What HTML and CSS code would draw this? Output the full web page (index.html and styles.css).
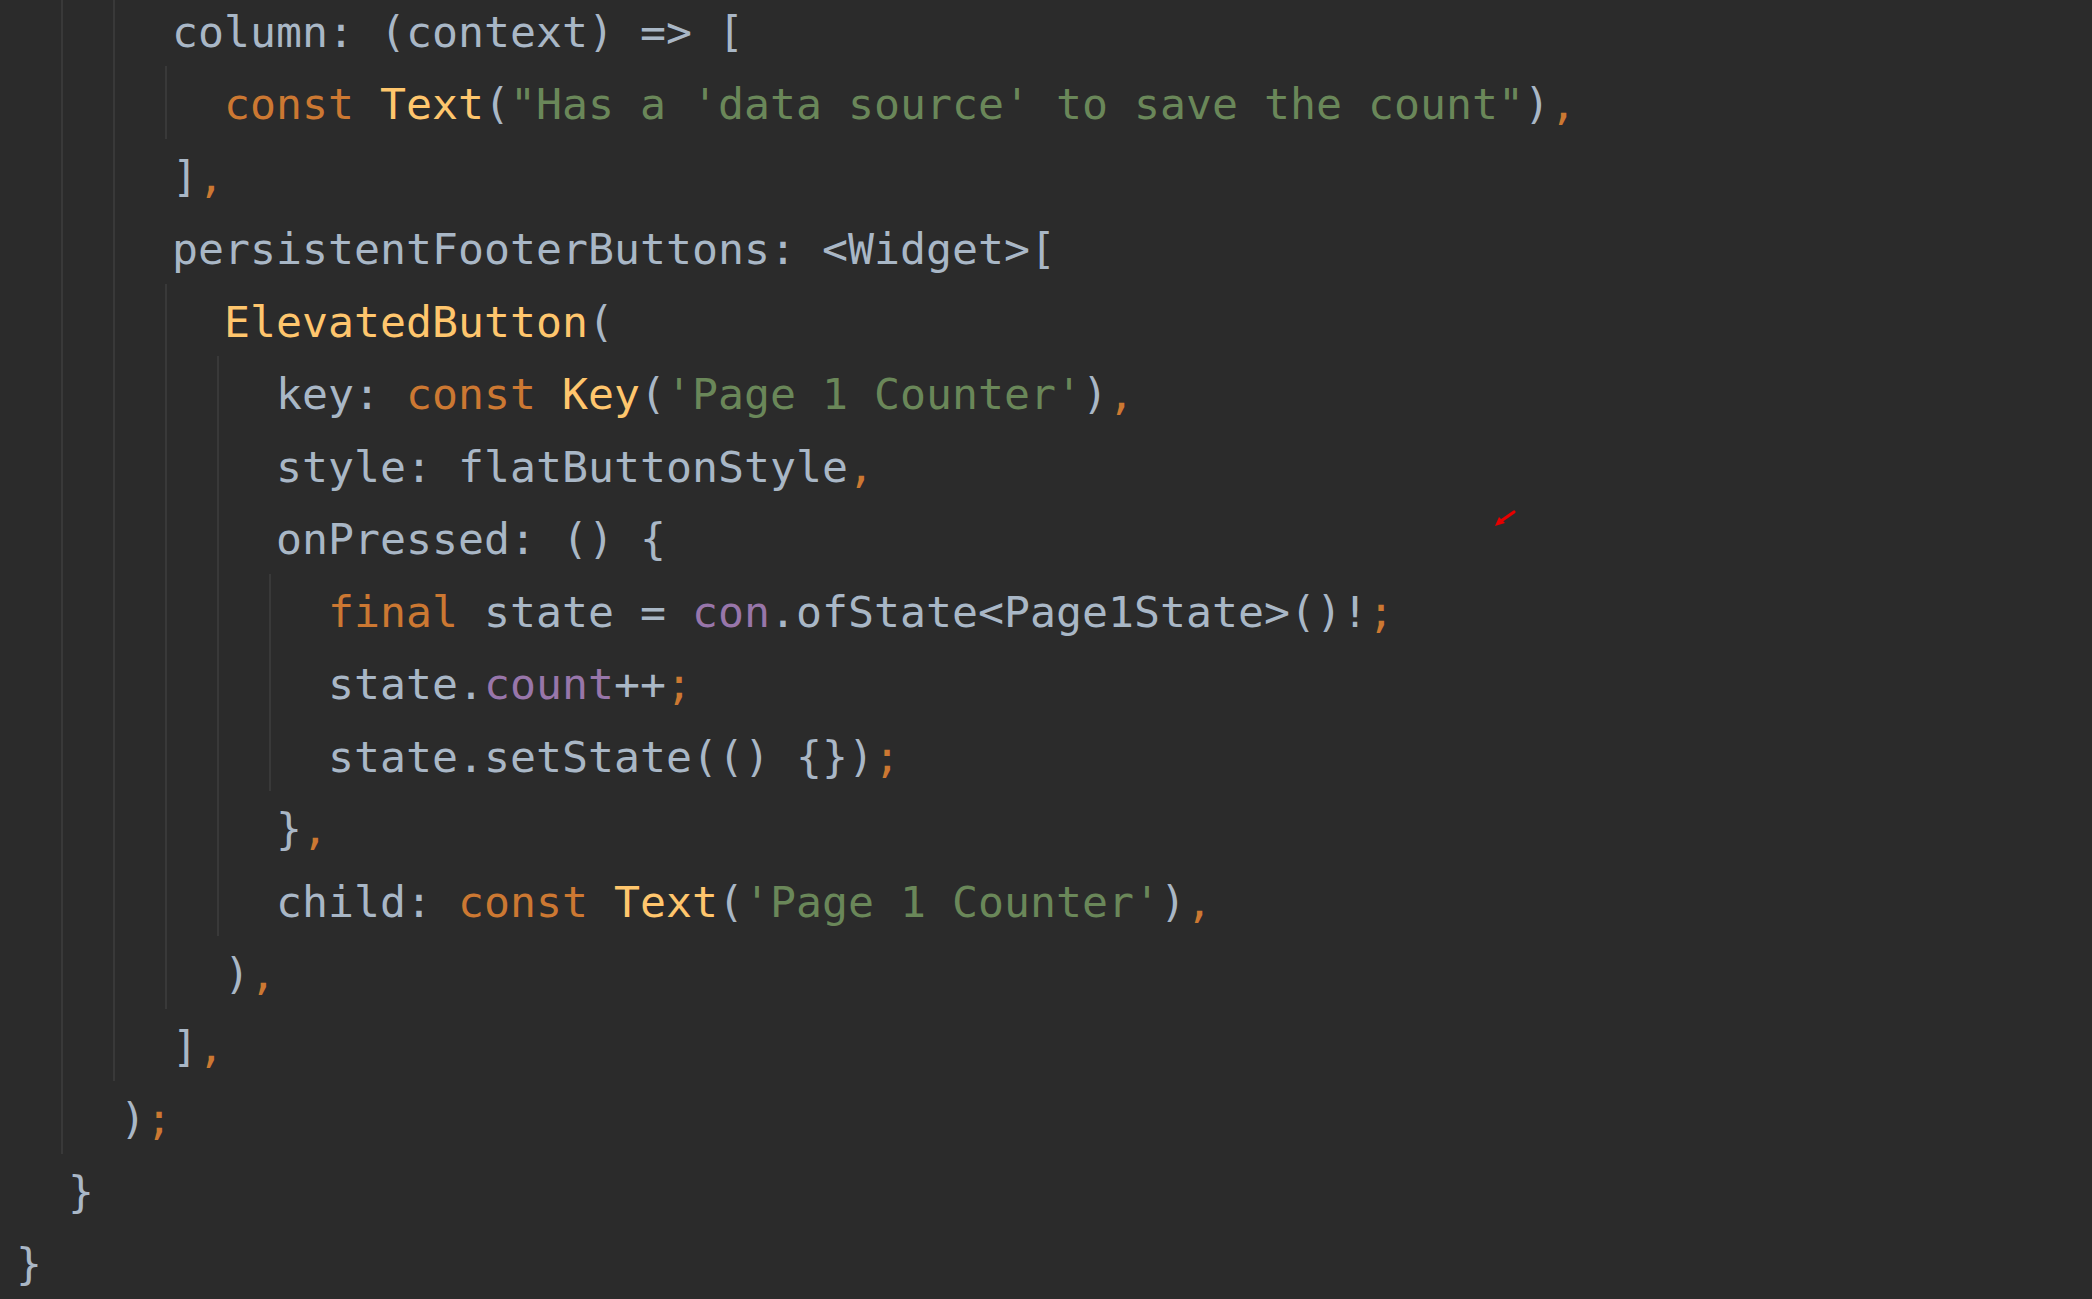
FILE: index.html
```html
<!DOCTYPE html>
<html lang="en">
<head>
<meta charset="utf-8">
<title>Editor</title>
<link rel="stylesheet" href="styles.css">
</head>
<body>
<main class="editor">
  <div class="line"><i class="g"></i><i class="g"></i><i class="s"></i><code>column: (context) =&gt; [</code></div>
  <div class="line"><i class="g"></i><i class="g"></i><i class="g"></i><i class="s"></i><code><span class="kw">const</span> <span class="fn">Text</span>(<span class="str">"Has a 'data source' to save the count"</span>)<span class="kw">,</span></code></div>
  <div class="line"><i class="g"></i><i class="g"></i><i class="s"></i><code>]<span class="kw">,</span></code></div>
  <div class="line"><i class="g"></i><i class="g"></i><i class="s"></i><code>persistentFooterButtons: &lt;Widget&gt;[</code></div>
  <div class="line"><i class="g"></i><i class="g"></i><i class="g"></i><i class="s"></i><code><span class="fn">ElevatedButton</span>(</code></div>
  <div class="line"><i class="g"></i><i class="g"></i><i class="g"></i><i class="g"></i><i class="s"></i><code>key: <span class="kw">const</span> <span class="fn">Key</span>(<span class="str">'Page 1 Counter'</span>)<span class="kw">,</span></code></div>
  <div class="line"><i class="g"></i><i class="g"></i><i class="g"></i><i class="g"></i><i class="s"></i><code>style: flatButtonStyle<span class="kw">,</span></code></div>
  <div class="line"><i class="g"></i><i class="g"></i><i class="g"></i><i class="g"></i><i class="s"></i><code>onPressed: () {</code></div>
  <div class="line"><i class="g"></i><i class="g"></i><i class="g"></i><i class="g"></i><i class="g"></i><i class="s"></i><code><span class="kw">final</span> state = <span class="fld">con</span>.ofState&lt;Page1State&gt;()!<span class="kw">;</span></code></div>
  <div class="line"><i class="g"></i><i class="g"></i><i class="g"></i><i class="g"></i><i class="g"></i><i class="s"></i><code>state.<span class="fld">count</span>++<span class="kw">;</span></code></div>
  <div class="line"><i class="g"></i><i class="g"></i><i class="g"></i><i class="g"></i><i class="g"></i><i class="s"></i><code>state.setState(() {})<span class="kw">;</span></code></div>
  <div class="line"><i class="g"></i><i class="g"></i><i class="g"></i><i class="g"></i><i class="s"></i><code>}<span class="kw">,</span></code></div>
  <div class="line"><i class="g"></i><i class="g"></i><i class="g"></i><i class="g"></i><i class="s"></i><code>child: <span class="kw">const</span> <span class="fn">Text</span>(<span class="str">'Page 1 Counter'</span>)<span class="kw">,</span></code></div>
  <div class="line"><i class="g"></i><i class="g"></i><i class="g"></i><i class="s"></i><code>)<span class="kw">,</span></code></div>
  <div class="line"><i class="g"></i><i class="g"></i><i class="s"></i><code>]<span class="kw">,</span></code></div>
  <div class="line"><i class="g"></i><i class="s"></i><code>)<span class="kw">;</span></code></div>
  <div class="line"><i class="s"></i><code>}</code></div>
  <div class="line"><code>}</code></div>
  <svg class="cursor-mark" width="30" height="24" viewBox="0 0 30 24" aria-hidden="true">
    <line x1="23" y1="5" x2="10" y2="14" stroke="#e60000" stroke-width="3.2" stroke-linecap="round"/>
    <polygon points="4,19 8,10 14,16" fill="#e60000"/>
  </svg>
</main>
</body>
</html>
```
FILE: styles.css
```css
html, body {
  margin: 0;
  padding: 0;
  background: #2b2b2b;
  overflow: hidden;
}

.editor {
  position: relative;
  margin-top: -6.5px;
  padding-left: 16px;
  font-family: "DejaVu Sans Mono", "Liberation Mono", monospace;
  font-size: 43.2px;
  color: #a9b7c6;
}

.line {
  display: flex;
  height: 72.5px;
}

.line i {
  flex: 0 0 52px;
  width: 52px;
}

.line i.g {
  background: linear-gradient(to right,
    transparent 45px, #393939 45px, #393939 47px, transparent 47px);
}

.line code {
  font: inherit;
  line-height: 72.5px;
  white-space: pre;
  padding-top: 2px;
}

.kw { color: #cc7832; }
.fn { color: #ffc66d; }
.str { color: #6a8759; }
.fld { color: #9876aa; }

.cursor-mark {
  position: absolute;
  left: 1491px;
  top: 513px;
}
```
